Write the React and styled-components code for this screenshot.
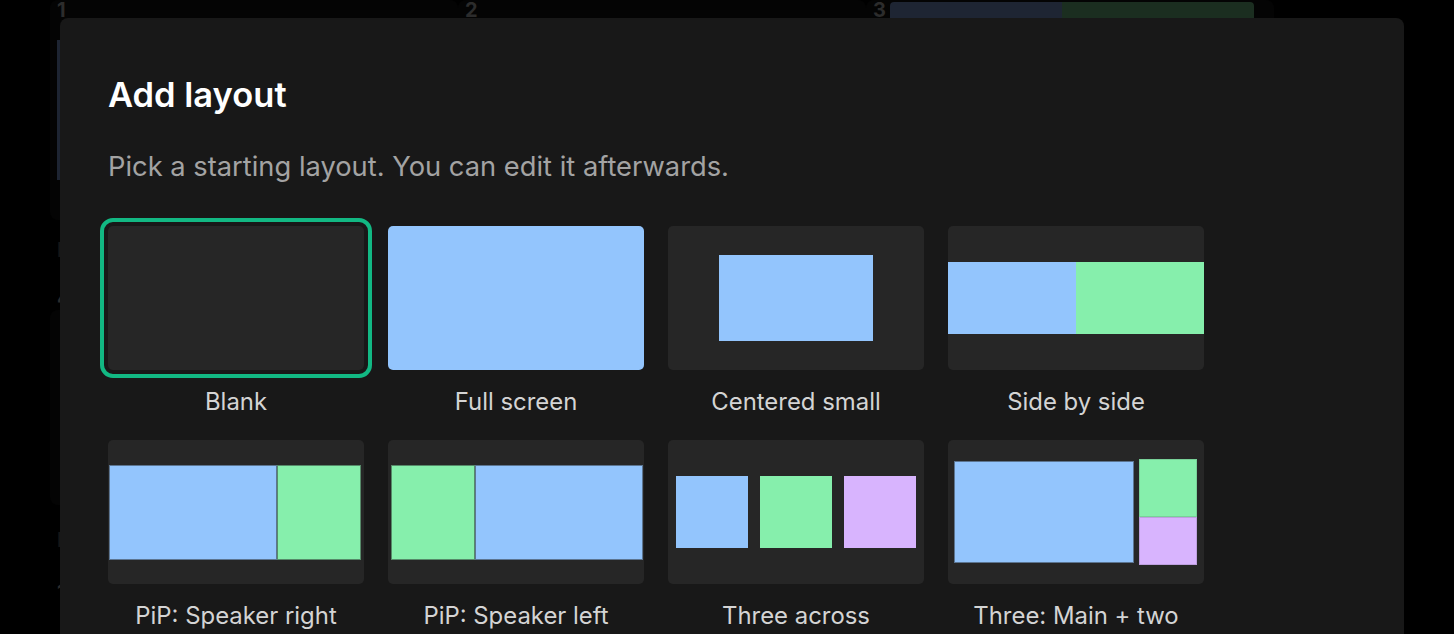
import React from 'react';
import styled, { createGlobalStyle } from 'styled-components';

const colors = {
    blue: '#93c5fd',
    green: '#86efac',
    purple: '#d8b4fe',
    thumb: '#262626',
    modal: '#181818',
    ring: '#12b883',
};

const Global = createGlobalStyle`
    html, body {
        margin: 0;
        height: 100%;
        background: #000;
        overflow: hidden;
        font-family: Inter, "Noto Sans", sans-serif;
    }
    * {
        box-sizing: border-box;
    }
`;

const Page = styled.div`
    position: relative;
    width: 100%;
    height: 634px;
    overflow: hidden;
`;

const Backdrop = styled.div`
    display: grid;
    grid-template-columns: repeat(3, 408px);
    padding-left: 50px;
    height: 100%;
`;

const Column = styled.div`
    display: flex;
    flex-direction: column;
`;

const Card = styled.div`
    display: flex;
    flex-direction: ${(p) => (p.$row ? 'row' : 'column')};
    align-items: flex-start;
    height: ${(p) => p.$h}px;
    margin-top: ${(p) => p.$top || 0}px;
    padding: 2px 0 0 7px;
    gap: ${(p) => (p.$row ? '1px' : '22px')};
    background: #040404;
    border-radius: 8px;
`;

const Num = styled.span`
    display: block;
    width: 16px;
    font-size: 20px;
    line-height: 16px;
    font-weight: 700;
    color: #2c2c2c;
`;

const Faint = styled(Num)`
    margin: ${(p) => p.$top}px 0 0 7px;
    color: ${(p) => p.$color || '#2c2c2c'};
`;

const Strip = styled.div`
    width: 300px;
    height: 140px;
    background: #1e2533;
`;

const Bar = styled.div`
    display: flex;
    width: 364px;
    height: 60px;
    border-radius: 4px;
    overflow: hidden;
`;

const BarPart = styled.div`
    width: ${(p) => p.$w}px;
    background: ${(p) => p.$color};
`;

const Modal = styled.div`
    position: absolute;
    top: 18px;
    left: 60px;
    width: 1344px;
    height: 700px;
    padding: 48px;
    background: ${colors.modal};
    border-radius: 8px;
`;

const Title = styled.h2`
    margin: 1px 0 0;
    font-size: 34.5px;
    line-height: 56px;
    font-weight: 600;
    color: #fff;
`;

const Subtitle = styled.p`
    margin: 24px 0 0;
    font-size: 27.3px;
    line-height: 40px;
    color: #a3a3a3;
`;

const Grid = styled.div`
    display: grid;
    grid-template-columns: repeat(4, 256px);
    column-gap: 24px;
    row-gap: 22px;
    margin-top: 39px;
`;

const Option = styled.div`
    display: flex;
    flex-direction: column;
    align-items: center;
    gap: 16px;
`;

const Thumb = styled.div`
    display: flex;
    width: 256px;
    height: 144px;
    align-items: center;
    justify-content: ${(p) => p.$justify || 'center'};
    gap: ${(p) => p.$gap || 0}px;
    padding-left: ${(p) => p.$pad || 0}px;
    background: ${colors.thumb};
    border-radius: 5px;
    overflow: ${(p) => (p.$selected ? 'visible' : 'hidden')};
    outline: ${(p) => (p.$selected ? `4px solid ${colors.ring}` : 'none')};
    outline-offset: 4px;
`;

const Tile = styled.div`
    flex: none;
    width: ${(p) => p.$w}px;
    height: ${(p) => p.$h}px;
    background: ${(p) => p.$color};
    border: ${(p) => (p.$edge ? `1px solid ${p.$edge}` : 'none')};
`;

const Stack = styled.div`
    display: flex;
    flex-direction: column;
`;

const Label = styled.div`
    font-size: 23.9px;
    line-height: 32px;
    color: #d4d4d4;
`;

const edge = 'rgba(38, 38, 38, 0.5)';
const softEdge = 'rgba(38, 38, 38, 0.15)';

const options = [
    { name: 'Blank', selected: true, tiles: null },
    {
        name: 'Full screen',
        tiles: <Tile $w={256} $h={144} $color={colors.blue} />,
    },
    {
        name: 'Centered small',
        tiles: <Tile $w={154} $h={86} $color={colors.blue} />,
    },
    {
        name: 'Side by side',
        tiles: (
            <>
                <Tile $w={128} $h={72} $color={colors.blue} />
                <Tile $w={128} $h={72} $color={colors.green} />
            </>
        ),
    },
    {
        name: 'PiP: Speaker right',
        justify: 'flex-start',
        pad: 1,
        tiles: (
            <>
                <Tile $w={168} $h={95} $color={colors.blue} $edge={edge} />
                <Tile $w={84} $h={95} $color={colors.green} $edge={edge} />
            </>
        ),
    },
    {
        name: 'PiP: Speaker left',
        justify: 'flex-start',
        pad: 3,
        tiles: (
            <>
                <Tile $w={84} $h={95} $color={colors.green} $edge={edge} />
                <Tile $w={168} $h={95} $color={colors.blue} $edge={edge} />
            </>
        ),
    },
    {
        name: 'Three across',
        gap: 12,
        tiles: (
            <>
                <Tile $w={72} $h={72} $color={colors.blue} />
                <Tile $w={72} $h={72} $color={colors.green} />
                <Tile $w={72} $h={72} $color={colors.purple} />
            </>
        ),
    },
    {
        name: 'Three: Main + two',
        justify: 'flex-start',
        pad: 6,
        gap: 5,
        tiles: (
            <>
                <Tile $w={180} $h={102} $color={colors.blue} $edge={edge} />
                <Stack>
                    <Tile $w={58} $h={58} $color={colors.green} $edge={softEdge} />
                    <Tile $w={58} $h={48} $color={colors.purple} $edge={softEdge} />
                </Stack>
            </>
        ),
    },
];

export default function App() {
    return (
        <Page>
            <Global />
            <Backdrop>
                <Column>
                    <Card $h={220}>
                        <Num>1</Num>
                        <Strip />
                    </Card>
                    <Faint $top={22} $color="#161616">P</Faint>
                    <Faint $top={32}>4</Faint>
                    <Card $h={195} $top={4} />
                    <Faint $top={27} $color="#161616">N</Faint>
                    <Faint $top={36}>1</Faint>
                </Column>
                <Column>
                    <Card $h={220}>
                        <Num>2</Num>
                    </Card>
                </Column>
                <Column>
                    <Card $h={220} $row>
                        <Num>3</Num>
                        <Bar>
                            <BarPart $w={172} $color="#1e2533" />
                            <BarPart $w={192} $color="#1b2e20" />
                        </Bar>
                    </Card>
                </Column>
            </Backdrop>
            <Modal>
                <Title>Add layout</Title>
                <Subtitle>Pick a starting layout. You can edit it afterwards.</Subtitle>
                <Grid>
                    {options.map((o) => (
                        <Option key={o.name}>
                            <Thumb
                                $selected={o.selected}
                                $justify={o.justify}
                                $pad={o.pad}
                                $gap={o.gap}
                            >
                                {o.tiles}
                            </Thumb>
                            <Label>{o.name}</Label>
                        </Option>
                    ))}
                </Grid>
            </Modal>
        </Page>
    );
}
